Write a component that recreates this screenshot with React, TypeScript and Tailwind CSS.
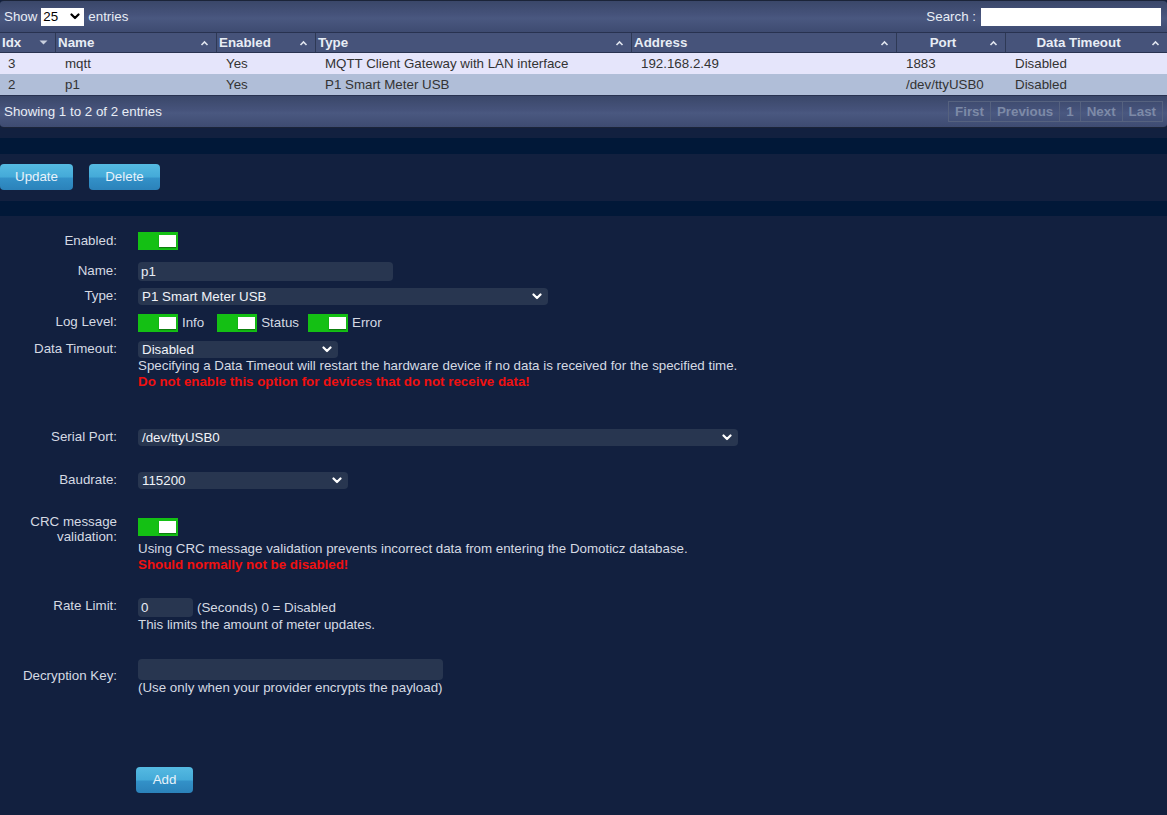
import React from 'react';

const cols = 'grid grid-cols-[55px_161px_99px_316px_265px_109px_1fr]';

const Caret = () => (
  <svg width="9" height="6" viewBox="0 0 9 6">
    <path d="M1.5 5 L4.5 2 L7.5 5" stroke="#dfe4ee" strokeWidth="1.6" fill="none" />
  </svg>
);

const DownTri = () => (
  <svg width="9" height="5" viewBox="0 0 9 5">
    <path d="M0.5 0.5 L8.5 0.5 L4.5 4.5 Z" fill="#c9d0de" />
  </svg>
);

const Chevron = ({ color = '#ffffff' }: { color?: string }) => (
  <svg width="10" height="7" viewBox="0 0 10 7">
    <path d="M1.5 1.5 L5 5 L8.5 1.5" stroke={color} strokeWidth="2.2" fill="none" strokeLinecap="round" strokeLinejoin="round" />
  </svg>
);

const Toggle = () => (
  <div className="flex h-[18px] w-[40px] shrink-0 items-center justify-end bg-[#14c014] pr-[2px]">
    <div className="h-[12px] w-[17px] bg-white shadow-[0_1px_1px_rgba(0,0,0,0.35)]" />
  </div>
);

const Select = ({ value, width }: { value: string; width: string }) => (
  <div className={`flex h-[17px] items-center justify-between rounded-[4px] bg-[#283650] pl-[4px] pr-[6px] text-[#f0f3f8] ${width}`}>
    <span>{value}</span>
    <Chevron />
  </div>
);

const Label = ({ children, className = '' }: { children: React.ReactNode; className?: string }) => (
  <div className={`w-[117px] shrink-0 text-right text-[#d5dae3] ${className}`}>{children}</div>
);

const btn =
  'flex items-center justify-center rounded-[4px] text-[13.333px] text-[#e8f2fa] bg-[linear-gradient(to_bottom,#55bae2_0%,#44aad8_50%,#3391c8_54%,#2b82ba_100%)]';

const gloss = 'bg-[linear-gradient(to_bottom,#3a4769_0%,#46537b_45%,#4a5880_55%,#3e4b71_100%)]';

const headers: { label: string; icon: 'down' | 'up'; center?: boolean }[] = [
  { label: 'Idx', icon: 'down' },
  { label: 'Name', icon: 'up' },
  { label: 'Enabled', icon: 'up' },
  { label: 'Type', icon: 'up' },
  { label: 'Address', icon: 'up' },
  { label: 'Port', icon: 'up', center: true },
  { label: 'Data Timeout', icon: 'up', center: true },
];

const rows = [
  ['3', 'mqtt', 'Yes', 'MQTT Client Gateway with LAN interface', '192.168.2.49', '1883', 'Disabled'],
  ['2', 'p1', 'Yes', 'P1 Smart Meter USB', '', '/dev/ttyUSB0', 'Disabled'],
];

export default function App() {
  return (
    <div className="min-h-[815px] bg-[#12203f] font-['Liberation_Sans',Arial,sans-serif] text-[13.333px] leading-[16px]">
      {/* table */}
      <div className="overflow-hidden rounded-[4px] border-y border-[#1b2438]">
        <div className={`flex h-[31px] items-center justify-between px-[4px] text-[#e8edf5] ${gloss}`}>
          <div className="flex items-center gap-[4px]">
            <span>Show</span>
            <div className="flex h-[18px] w-[43px] items-center justify-between bg-white pl-[2px] pr-[4px] text-black">
              <span>25</span>
              <Chevron color="#000000" />
            </div>
            <span>entries</span>
          </div>
          <div className="flex items-center gap-[5px] pr-[2px]">
            <span>Search :</span>
            <div className="h-[18px] w-[180px] bg-white" />
          </div>
        </div>
        <div className={`${cols} h-[21px] border-y border-[#283250] bg-[#46537a] font-bold text-[#e8edf5]`}>
          {headers.map((h, i) => (
            <div
              key={h.label}
              className={`flex items-center pl-[2px] pr-[7px] ${i > 0 ? 'border-l border-[#2e3955]' : ''}`}
            >
              <span className={`flex-1 ${h.center ? 'pr-[2px] text-center' : ''}`}>{h.label}</span>
              {h.icon === 'down' ? <DownTri /> : <Caret />}
            </div>
          ))}
        </div>
        {rows.map((r, ri) => (
          <div
            key={ri}
            className={`${cols} h-[21px] items-center text-[#333333] ${ri === 0 ? 'bg-[#e5e5fb]' : 'bg-[#b0bed8]'}`}
          >
            {r.map((c, ci) => (
              <div key={ci} className={ci === 0 ? 'pl-[8px]' : 'pl-[10px]'}>
                {c}
              </div>
            ))}
          </div>
        ))}
        <div className={`flex h-[32px] items-center justify-between border-t border-[#283250] pl-[4px] pr-[4px] text-[#e8edf5] ${gloss}`}>
          <span>Showing 1 to 2 of 2 entries</span>
          <div className="flex h-[21px] font-bold text-[#7d8aa7]">
            {['First', 'Previous', '1', 'Next', 'Last'].map((p, i) => (
              <div
                key={p}
                className={`flex items-center border-y border-r border-[#56627f] px-[6px] ${i === 0 ? 'border-l' : ''}`}
              >
                {p}
              </div>
            ))}
          </div>
        </div>
      </div>

      <div className="mt-[10px] h-[16px] bg-[#011838]" />

      <div className="flex gap-[16px] pb-[11px] pt-[10px]">
        <button className={`${btn} h-[26px] w-[73px]`}>Update</button>
        <button className={`${btn} h-[26px] w-[71px]`}>Delete</button>
      </div>

      <div className="h-[15px] bg-[#011838]" />

      {/* form */}
      <div className="flex flex-col pt-[16px]">
        <div className="flex gap-[21px]">
          <Label className="pt-[1px]">Enabled:</Label>
          <Toggle />
        </div>

        <div className="mt-[12px] flex gap-[21px]">
          <Label className="pt-[1px]">Name:</Label>
          <div className="flex h-[19px] w-[255px] items-center rounded-[4px] bg-[#283650] pl-[3px] text-[#e8edf5]">p1</div>
        </div>

        <div className="mt-[7px] flex gap-[21px]">
          <Label>Type:</Label>
          <Select value="P1 Smart Meter USB" width="w-[410px]" />
        </div>

        <div className="mt-[9px] flex gap-[21px]">
          <Label>Log Level:</Label>
          <div className="flex items-center text-[#d5dae3]">
            <Toggle />
            <span className="ml-[4px] mr-[13px]">Info</span>
            <Toggle />
            <span className="ml-[4px] mr-[9px]">Status</span>
            <Toggle />
            <span className="ml-[4px]">Error</span>
          </div>
        </div>

        <div className="mt-[9px] flex gap-[21px]">
          <Label>Data Timeout:</Label>
          <div className="flex flex-col">
            <Select value="Disabled" width="w-[200px]" />
            <span className="text-[#d5dae3]">
              Specifying a Data Timeout will restart the hardware device if no data is received for the specified time.
            </span>
            <span className="font-bold text-[#f01010]">Do not enable this option for devices that do not receive data!</span>
          </div>
        </div>

        <div className="mt-[39px] flex gap-[21px]">
          <Label>Serial Port:</Label>
          <Select value="/dev/ttyUSB0" width="w-[600px]" />
        </div>

        <div className="mt-[26px] flex gap-[21px]">
          <Label>Baudrate:</Label>
          <Select value="115200" width="w-[210px]" />
        </div>

        <div className="mt-[25px] flex gap-[21px]">
          <Label className="leading-[15px]">
            CRC message
            <br />
            validation:
          </Label>
          <div className="flex flex-col pt-[4px]">
            <Toggle />
            <span className="mt-[5px] text-[#d5dae3]">
              Using CRC message validation prevents incorrect data from entering the Domoticz database.
            </span>
            <span className="font-bold text-[#f01010]">Should normally not be disabled!</span>
          </div>
        </div>

        <div className="mt-[25px] flex gap-[21px]">
          <Label>Rate Limit:</Label>
          <div className="flex flex-col text-[#d5dae3]">
            <div className="flex items-center">
              <div className="flex h-[19px] w-[55px] items-center rounded-[4px] bg-[#283650] pl-[3px] text-[#e8edf5]">0</div>
              <span className="ml-[4px] pt-[1px]">(Seconds) 0 = Disabled</span>
            </div>
            <span>This limits the amount of meter updates.</span>
          </div>
        </div>

        <div className="mt-[26px] flex gap-[21px]">
          <Label className="pt-[9px]">Decryption Key:</Label>
          <div className="flex flex-col text-[#d5dae3]">
            <div className="h-[21px] w-[305px] rounded-[4px] bg-[#283650]" />
            <span>(Use only when your provider encrypts the payload)</span>
          </div>
        </div>

        <div className="ml-[136px] mt-[71px] pb-[22px]">
          <button className={`${btn} h-[26px] w-[57px]`}>Add</button>
        </div>
      </div>
    </div>
  );
}
